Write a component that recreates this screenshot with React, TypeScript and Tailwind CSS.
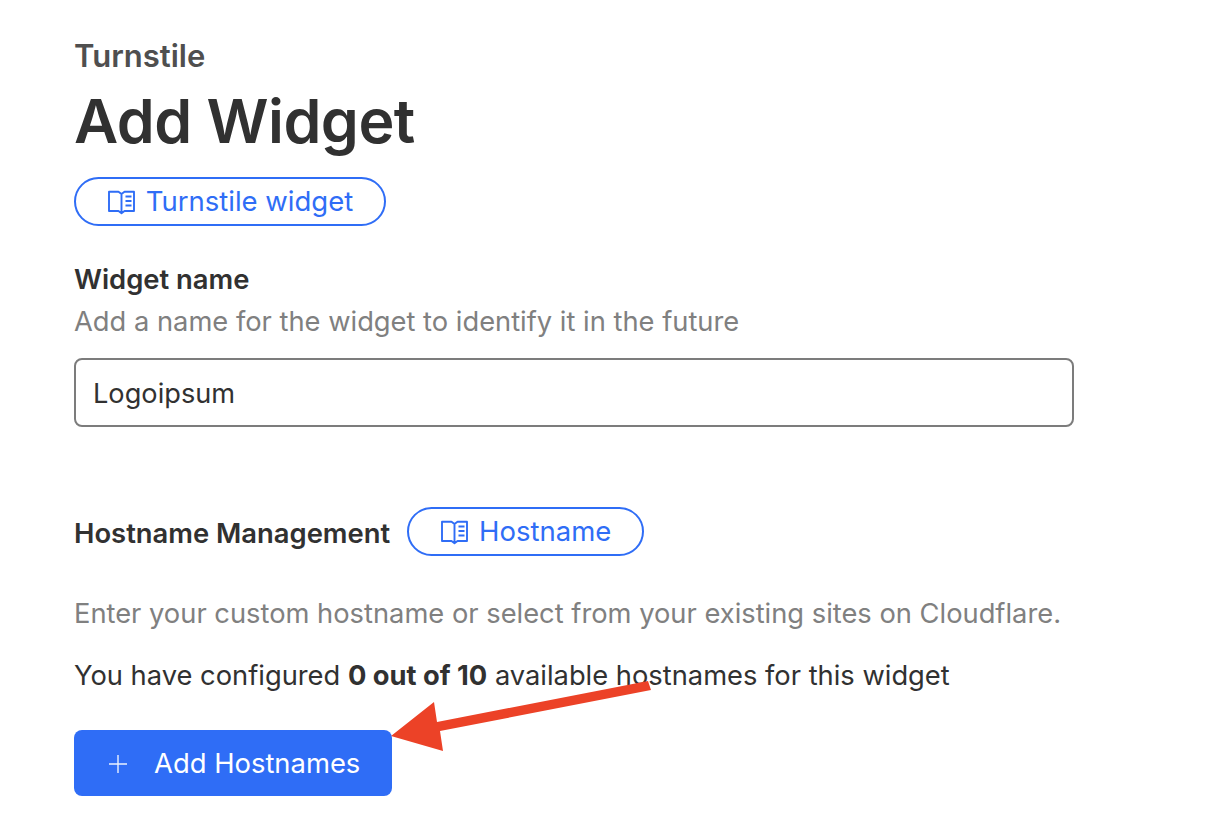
const inter = { fontFamily: 'Inter, sans-serif' };

function BookIcon() {
  return (
    <svg width="28" height="26" viewBox="0 0 28 26" fill="none" stroke="currentColor" strokeWidth="1.9" className="shrink-0">
      <path d="M14.5 5 L11.5 2.8 H2 V22 H11.5 L14.5 24.2 L17.5 22 H27 V2.8 H17.5 L14.5 5 V24.2" strokeLinejoin="round" />
      <path d="M18.5 7.5 H24.5 M18.5 12 H24.5 M18.5 16.5 H24.5" />
    </svg>
  );
}

function DocPill({ label, className }: { label: string; className: string }) {
  return (
    <a className={`flex h-[49px] items-center justify-center gap-[11px] rounded-full border-2 border-[#2f6df6] bg-white text-[27.5px] text-[#2f6df6] ${className}`}>
      <BookIcon />
      {label}
    </a>
  );
}

export default function App() {
  return (
    <div className="relative h-[824px] w-[1226px] overflow-hidden bg-white text-[#313131]" style={inter}>
      <div className="flex flex-col items-start pl-[74px] pt-[37px]">
        <p className="text-[31px] font-semibold leading-[38px] text-[#4f4f4f]">Turnstile</p>
        <h1 className="mt-[8px] text-[60.8px] font-semibold leading-[76px] tracking-[-0.5px]">Add Widget</h1>
        <DocPill label="Turnstile widget" className="mt-[18px] w-[312px]" />

        <label className="mt-[34px] text-[27.4px] font-semibold leading-[38px]">Widget name</label>
        <p className="mt-[5px] text-[27.3px] leading-[38px] text-[#808080]">Add a name for the widget to identify it in the future</p>
        <div className="mt-[17px] flex h-[69px] w-[1000px] items-center rounded-[8px] border-2 border-[#7c7c7c] px-[17px] pt-[3px] text-[27.2px]">
          Logoipsum
        </div>

        <div className="mt-[80px] flex items-center gap-[17px]">
          <span className="pt-[4px] text-[27.4px] font-semibold">Hostname Management</span>
          <DocPill label="Hostname" className="w-[237px]" />
        </div>
        <p className="mt-[39px] text-[27.3px] leading-[38px] text-[#808080]">Enter your custom hostname or select from your existing sites on Cloudflare.</p>
        <p className="mt-[24px] text-[27.3px] leading-[38px]">
          You have configured <b className="font-bold">0 out of 10</b> available hostnames for this widget
        </p>
        <button className="mt-[35px] flex h-[66px] w-[318px] items-center gap-[25px] rounded-[8px] bg-[#2f6df6] pl-[33px] pt-[1px] text-[27.4px] text-white">
          <svg width="22" height="22" viewBox="0 0 22 22" stroke="currentColor" strokeWidth="1.4" className="shrink-0 opacity-90">
            <path d="M11 2 V20 M2 11 H20" />
          </svg>
          Add Hostnames
        </button>
      </div>

      {/* Annotation arrow */}
      <svg className="absolute left-0 top-0" width="1226" height="824" viewBox="0 0 1226 824">
        <path d="M391 736 L434 702 L437 722 L648 681 L651 690 L440 731 L443 751 Z" fill="#ec4227" />
      </svg>
    </div>
  );
}
